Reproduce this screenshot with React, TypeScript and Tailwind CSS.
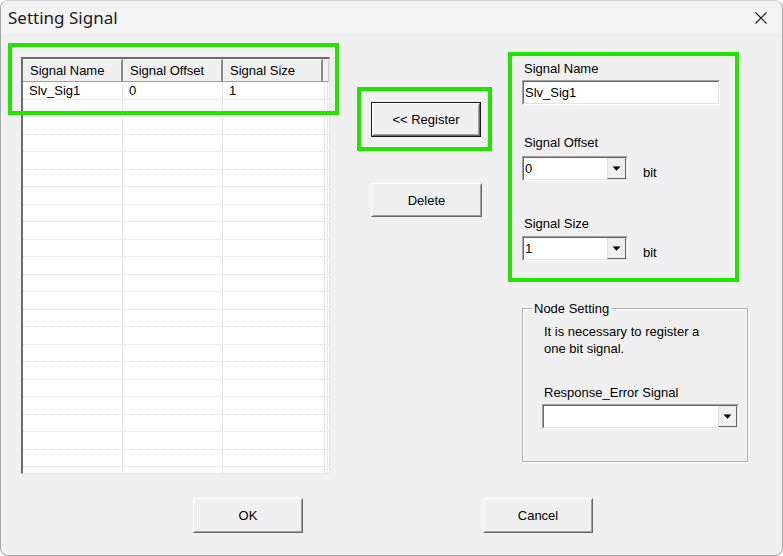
import React from "react";

const font = { fontFamily: '"Liberation Sans", Arial, sans-serif' };

function Raised({ children, className = "" }: { children?: React.ReactNode; className?: string }) {
  return (
    <div className={`border border-t-white border-l-white border-b-[#696969] border-r-[#696969] bg-[#f0f0f0] ${className}`}>
      <div className="w-full h-full border border-t-[#f0f0f0] border-l-[#f0f0f0] border-b-[#a0a0a0] border-r-[#a0a0a0] flex items-center justify-center">
        {children}
      </div>
    </div>
  );
}

function Sunken({ children, className = "" }: { children?: React.ReactNode; className?: string }) {
  return (
    <div className={`border border-t-[#a0a0a0] border-l-[#a0a0a0] border-b-white border-r-white bg-white ${className}`}>
      <div className="w-full h-full border border-t-[#696969] border-l-[#696969] border-b-[#e3e3e3] border-r-[#e3e3e3] flex items-center">
        {children}
      </div>
    </div>
  );
}

function Combo({ value, className = "" }: { value: string; className?: string }) {
  return (
    <Sunken className={className}>
      <span className="flex-1 pl-[1px] text-[13px] leading-[15px] text-black">{value}</span>
      <div className="h-full">
        <div className="h-full w-[19px] border border-t-[#e3e3e3] border-l-[#e3e3e3] border-b-[#696969] border-r-[#696969] bg-[#f0f0f0] flex items-center justify-center">
          <svg width="9" height="5" viewBox="0 0 9 5">
            <path d="M0.5 0.5 H8.5 L4.5 4.8 Z" fill="#000" />
          </svg>
        </div>
      </div>
    </Sunken>
  );
}

export default function App() {
  const rows = Array.from({ length: 23 });
  return (
    <div className="w-[783px] h-[556px] bg-white">
      <div
        className="relative w-[783px] h-[556px] bg-[#f0f0f0] border border-[#a7a7a7] border-t-[#d0d0d0] rounded-[8px] overflow-hidden text-black"
        style={font}
      >
        {/* Title bar */}
        <div className="h-[33px] flex items-center justify-between pl-[7px] pr-[15px] bg-[#f3f3f3]">
          <span
            className="text-[17px] leading-[20px] text-[#1a1a1a]"
            style={{ fontFamily: '"Noto Sans", "Open Sans", sans-serif' }}
          >
            Setting Signal
          </span>
          <svg width="12" height="12" viewBox="0 0 12 12">
            <path d="M0.5 0.5 L11.5 11.5 M11.5 0.5 L0.5 11.5" stroke="#1a1a1a" strokeWidth="1.1" />
          </svg>
        </div>

        {/* Body */}
        <div className="flex pl-[20px] pt-[23px]">
          {/* Table */}
          <div className="w-[309px] h-[417px] bg-white border-l-2 border-t-2 border-l-[#6d6d6d] border-t-[#6d6d6d] border-r border-b border-r-[#e3e3e3] border-b-[#e3e3e3] overflow-hidden flex flex-col">
            <div className="flex h-[23px] shrink-0 bg-[#f0f0f0]">
              {["Signal Name", "Signal Offset", "Signal Size"].map((t) => (
                <div
                  key={t}
                  className="w-[100px] h-full border-t border-t-white border-b border-b-[#a0a0a0] border-r-2 border-r-[#8a8a8a] flex items-center pl-[7px] text-[13px] leading-[15px]"
                >
                  {t}
                </div>
              ))}
              <div className="flex-1 h-full border-t border-t-white border-b border-b-[#a0a0a0] border-r border-r-[#d0d0d0]" />
            </div>
            <div className="flex-1 flex flex-col">
              {rows.map((_, i) => (
                <div key={i} className="flex h-[17.5px] shrink-0 border-b border-dotted border-b-[#dedede]">
                  <div className="w-[100px] h-full border-r border-r-[#e8e8e8] flex items-center pl-[6px] text-[13px] leading-[15px]">
                    {i === 0 ? "Slv_Sig1" : ""}
                  </div>
                  <div className="w-[100px] h-full border-r border-r-[#e8e8e8] flex items-center pl-[6px] text-[13px] leading-[15px]">
                    {i === 0 ? "0" : ""}
                  </div>
                  <div className="w-[102px] h-full border-r border-r-[#e8e8e8] flex items-center pl-[6px] text-[13px] leading-[15px]">
                    {i === 0 ? "1" : ""}
                  </div>
                  <div className="w-[3px] h-full border-r border-r-[#e8e8e8]" />
                </div>
              ))}
            </div>
          </div>

          {/* Middle buttons */}
          <div className="ml-[41px] pt-[45px] flex flex-col">
            <div className="w-[110px] h-[35px] border border-[#1a1a1a]">
              <Raised className="w-full h-full">
                <span className="text-[13px] leading-[15px]">&lt;&lt; Register</span>
              </Raised>
            </div>
            <Raised className="w-[111px] h-[34px] mt-[46px]">
              <span className="text-[13px] leading-[15px]">Delete</span>
            </Raised>
          </div>

          {/* Right column */}
          <div className="ml-[40px] flex flex-col">
            <span className="mt-[4px] pl-[2px] text-[13px] leading-[15px]">Signal Name</span>
            <Sunken className="mt-[4px] w-[198px] h-[25px]">
              <span className="pl-[1px] text-[13px] leading-[15px]">Slv_Sig1</span>
            </Sunken>

            <span className="mt-[30px] pl-[2px] text-[13px] leading-[15px]">Signal Offset</span>
            <div className="mt-[6px] flex">
              <Combo value="0" className="w-[106px] h-[25px]" />
              <span className="ml-[15px] mt-[9px] text-[13px] leading-[15px]">bit</span>
            </div>

            <span className="mt-[35px] pl-[2px] text-[13px] leading-[15px]">Signal Size</span>
            <div className="mt-[5px] flex">
              <Combo value="1" className="w-[106px] h-[25px]" />
              <span className="ml-[15px] mt-[9px] text-[13px] leading-[15px]">bit</span>
            </div>

            <fieldset className="mt-[40px] w-[226px] h-[161px] border border-[#b0b0b0] shadow-[inset_1px_1px_0_#ffffff,1px_1px_0_#ffffff]">
              <legend className="ml-[9px] px-[2px] text-[13px] leading-[15px]">Node Setting</legend>
              <div className="pl-[21px] mt-[7px] text-[13px] leading-[17px]">
                <div>It is necessary to register a</div>
                <div>one bit signal.</div>
              </div>
              <div className="pl-[21px] mt-[27px] text-[13px] leading-[17px]">Response_Error Signal</div>
              <div className="pl-[19px] mt-[3px]">
                <Combo value="" className="w-[197px] h-[25px]" />
              </div>
            </fieldset>
          </div>
        </div>

        {/* Bottom buttons */}
        <div className="flex pl-[192px] mt-[24px]">
          <Raised className="w-[110px] h-[35px]">
            <span className="text-[13px] leading-[15px]">OK</span>
          </Raised>
          <Raised className="w-[110px] h-[35px] ml-[180px]">
            <span className="text-[13px] leading-[15px]">Cancel</span>
          </Raised>
        </div>

        {/* Green annotation overlays */}
        <div className="absolute left-[7px] top-[42px] w-[331px] h-[72px] border-[4px] border-[#22e400]" />
        <div className="absolute left-[356px] top-[86px] w-[135px] h-[64px] border-[4px] border-[#22e400]" />
        <div className="absolute left-[507px] top-[51px] w-[231px] h-[230px] border-[4px] border-[#22e400]" />
      </div>
    </div>
  );
}
